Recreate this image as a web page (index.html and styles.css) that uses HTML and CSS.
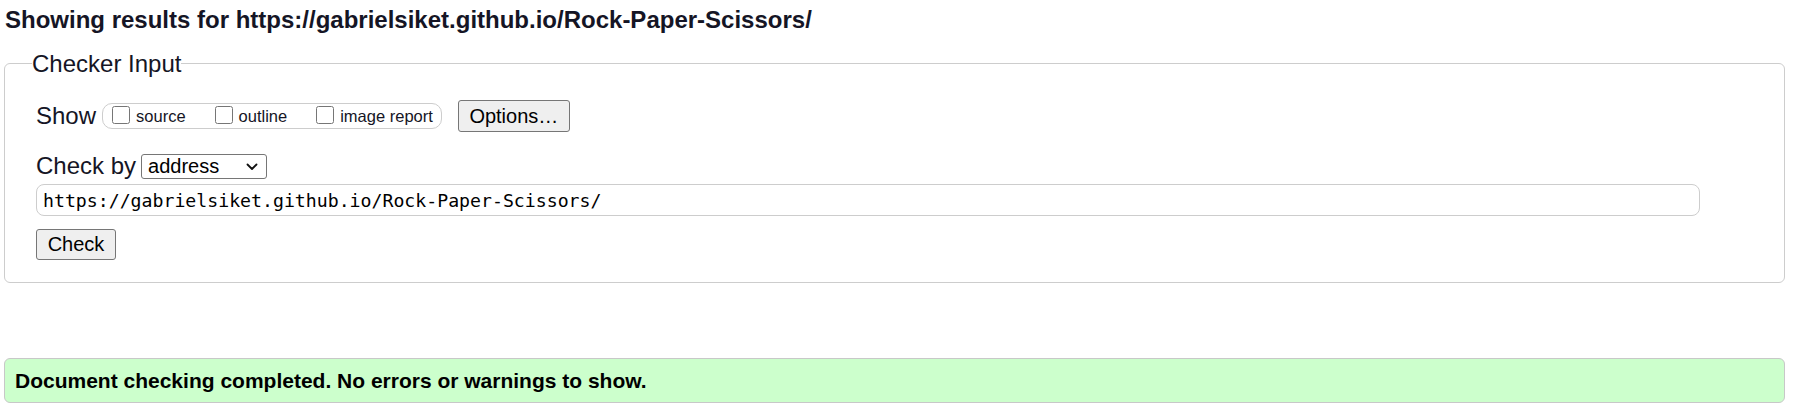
FILE: index.html
```html
<!DOCTYPE html>
<html lang="en">
<head>
<meta charset="utf-8">
<title>Nu Html Checker</title>
<link rel="stylesheet" href="styles.css">
</head>
<body>
<h2 class="results-title">Showing results for https://gabrielsiket.github.io/Rock-Paper-Scissors/</h2>
<form class="checker-form">
  <fieldset class="checker-input">
    <legend class="checker-legend">Checker Input</legend>
    <div class="show-row">
      <span class="show-label">Show</span>
      <span class="show-box">
        <label class="show-option"><input type="checkbox" class="show-check"><span>source</span></label>
        <label class="show-option"><input type="checkbox" class="show-check"><span>outline</span></label>
        <label class="show-option"><input type="checkbox" class="show-check"><span>image report</span></label>
      </span>
      <button type="button" class="btn btn-options">Options…</button>
    </div>
    <div class="checkby-row">
      <label class="checkby-label" for="docselect">Check by</label>
      <span class="select-wrap">
        <select id="docselect" class="checkby-select">
          <option>address</option>
          <option>file upload</option>
          <option>text input</option>
        </select>
        <svg class="select-arrow" width="12" height="8" viewBox="0 0 12 8" aria-hidden="true"><path d="M1.5 1.5 L6 6 L10.5 1.5" fill="none" stroke="#111" stroke-width="1.8" stroke-linecap="round" stroke-linejoin="round"/></svg>
      </span>
    </div>
    <div class="url-row">
      <input type="url" class="url-input" value="https://gabrielsiket.github.io/Rock-Paper-Scissors/">
    </div>
    <div class="submit-row">
      <button type="button" class="btn btn-check">Check</button>
    </div>
  </fieldset>
</form>
<div class="success">Document checking completed. No errors or warnings to show.</div>
</body>
</html>
```
FILE: styles.css
```css
html {
  background: #fff;
}
body {
  margin: 0;
  padding: 6px 14px 0 4px;
  font-family: "Liberation Sans", Arial, sans-serif;
  color: #111;
}
.results-title {
  margin: 0 0 0 1px;
  font-size: 24px;
  font-weight: bold;
  line-height: 27.6px;
  color: #151525;
}
.checker-form {
  margin: 16px 0 0 0;
}
.checker-input {
  margin: 0;
  border: 1px solid #cdcdcd;
  border-radius: 6px;
  padding: 0 30px 22px 31px;
  min-inline-size: 0;
}
.checker-legend {
  padding: 0;
  margin-left: -4px;
  font-size: 24px;
  line-height: 27.6px;
  color: #151525;
}
.show-row {
  display: flex;
  align-items: center;
  height: 32px;
  margin-top: 23px;
}
.show-label {
  font-size: 24px;
  color: #151525;
  margin-right: 6px;
}
.show-box {
  display: inline-flex;
  align-items: center;
  height: 26px;
  box-sizing: border-box;
  border: 1px solid #cdcdcd;
  border-radius: 10px;
  padding: 0 8px 0 9px;
}
.show-option {
  display: inline-flex;
  align-items: center;
  font-size: 16.5px;
  color: #151525;
  margin-right: 29px;
}
.show-option:last-child {
  margin-right: 0;
}
.show-check {
  width: 18px;
  height: 18px;
  margin: -3px 6px 0 0;
}
.btn {
  font-family: "Liberation Sans", Arial, sans-serif;
  font-size: 20px;
  color: #000;
  background: #efefef;
  border: 1px solid #767676;
  border-radius: 3px;
  padding: 0;
  box-sizing: border-box;
}
.btn-options {
  margin-left: 16px;
  width: 112px;
  height: 32px;
}
.checkby-row {
  display: flex;
  align-items: center;
  height: 28px;
  margin-top: 20px;
}
.checkby-label {
  font-size: 24px;
  color: #151525;
  margin-right: 5px;
}
.select-wrap {
  position: relative;
  display: inline-flex;
}
.checkby-select {
  appearance: none;
  -webkit-appearance: none;
  width: 126px;
  height: 25px;
  box-sizing: border-box;
  font-family: "Liberation Sans", Arial, sans-serif;
  font-size: 20px;
  line-height: 23px;
  padding: 0 0 0 6px;
  border: 1px solid #767676;
  border-radius: 3px;
  background: #fff;
  color: #000;
}
.select-arrow {
  position: absolute;
  right: 9px;
  top: 9px;
  pointer-events: none;
}
.url-row {
  margin-top: 4px;
  display: flex;
}
.url-input {
  width: 1664px;
  height: 32px;
  box-sizing: border-box;
  border: 1px solid #cdcdcd;
  border-radius: 8px;
  padding: 0 6px;
  font-family: "DejaVu Sans Mono", "Liberation Mono", monospace;
  font-size: 18.2px;
  color: #000;
  outline: none;
}
.submit-row {
  margin-top: 13px;
  display: flex;
}
.btn-check {
  width: 80px;
  height: 31px;
}
.success {
  margin-top: 75px;
  height: 45px;
  box-sizing: border-box;
  display: flex;
  align-items: center;
  background: #ccffcc;
  border: 1px solid #c8c8c8;
  border-radius: 6px;
  padding: 0 10px;
  font-size: 21px;
  font-weight: bold;
  color: #000;
}
```
